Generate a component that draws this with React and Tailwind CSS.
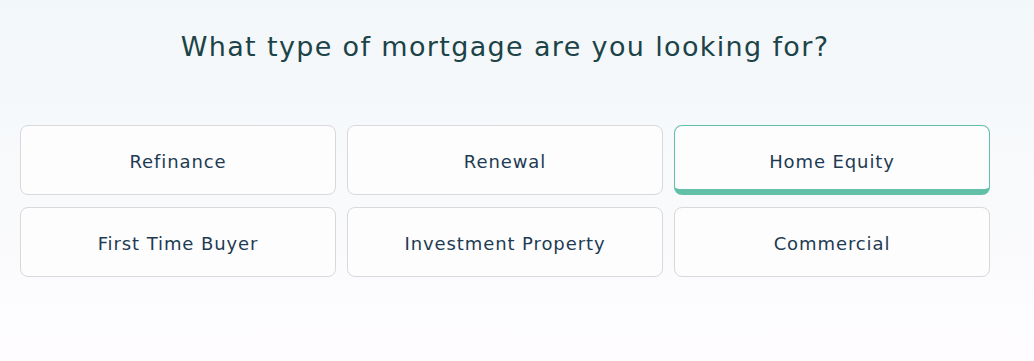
const OPTIONS = [
  "Refinance",
  "Renewal",
  "Home Equity",
  "First Time Buyer",
  "Investment Property",
  "Commercial",
];

export default function App() {
  const selected = "Home Equity";

  return (
    <div
      className="min-h-[361px] w-full bg-gradient-to-b from-[#f2f7f9] to-[#fefcfe] px-5 pt-[25px]"
      style={{ fontFamily: '"DejaVu Sans", "Open Sans", sans-serif' }}
    >
      <div className="w-[970px]">
        <h1 className="text-center text-[27px] leading-[44px] text-[#1c4448] font-normal tracking-[0.05em]">
          What type of mortgage are you looking for?
        </h1>

        <div className="mt-[56px] grid grid-cols-3 gap-x-[11px] gap-y-[12px]">
          {OPTIONS.map((o) => (
            <button
              key={o}
              className={
                o === selected
                  ? "h-[70px] rounded-[8px] border border-[#63c0a8] border-b-[6px] bg-[#fdfdfe] pt-[8px] text-[18px] tracking-[0.05em] text-[#1d3b52]"
                  : "h-[70px] rounded-[8px] border border-[#d9d8dd] bg-[#fdfdfe] pt-[3px] text-[18px] tracking-[0.05em] text-[#1d3b52]"
              }
            >
              {o}
            </button>
          ))}
        </div>
      </div>
    </div>
  );
}
